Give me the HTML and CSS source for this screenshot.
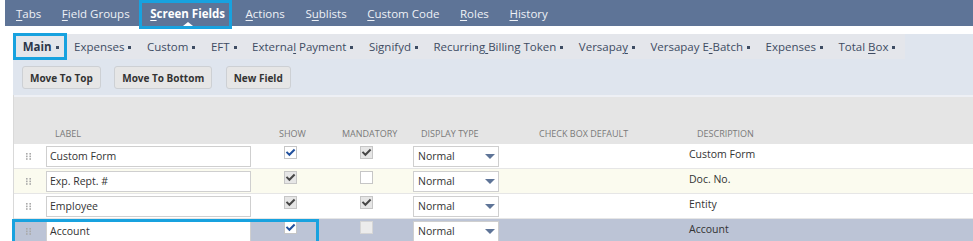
FILE: index.html
```html
<!DOCTYPE html>
<html>
<head>
<meta charset="utf-8">
<link rel="stylesheet" href="styles.css">
</head>
<body>
<nav class="topnav">
  <span class="nav-item"><span><u>T</u>abs</span></span>
  <span class="nav-item"><span><u>F</u>ield Groups</span></span>
  <span class="nav-item active"><span><u>S</u>creen Fields</span></span>
  <span class="nav-item"><span><u>A</u>ctions</span></span>
  <span class="nav-item"><span>S<u>u</u>blists</span></span>
  <span class="nav-item"><span><u>C</u>ustom Code</span></span>
  <span class="nav-item"><span><u>R</u>oles</span></span>
  <span class="nav-item"><span><u>H</u>istory</span></span>
</nav>

<section class="panel">
  <div class="subtabs">
    <span class="subtab active"><span>Main</span><i class="dot"></i></span>
    <span class="subtab"><span>Expenses</span><i class="dot"></i></span>
    <span class="subtab"><span>Custom</span><i class="dot"></i></span>
    <span class="subtab"><span>EFT</span><i class="dot"></i></span>
    <span class="subtab"><span>Externa<u>l</u> Payment</span><i class="dot"></i></span>
    <span class="subtab"><span>Signifyd</span><i class="dot"></i></span>
    <span class="subtab"><span>Recurring<u>&nbsp;</u>Billing Token</span><i class="dot"></i></span>
    <span class="subtab"><span>Versapa<u>y</u></span><i class="dot"></i></span>
    <span class="subtab"><span>Versapay E<u>-</u>Batch</span><i class="dot"></i></span>
    <span class="subtab"><span>Expenses</span><i class="dot"></i></span>
    <span class="subtab"><span>Total <u>B</u>ox</span><i class="dot"></i></span>
  </div>
  <div class="buttons">
    <span class="btn">Move To Top</span>
    <span class="btn">Move To Bottom</span>
    <span class="btn">New Field</span>
  </div>
</section>

<div class="table">
  <div class="thead">
    <span></span>
    <span class="h-label">Label</span>
    <span class="h-show">Show</span>
    <span class="h-mand">Mandatory</span>
    <span class="h-disp">Display Type</span>
    <span class="h-cbd">Check Box Default</span>
    <span class="h-desc">Description</span>
  </div>

  <div class="row">
    <span class="handle"><svg width="6" height="7" viewBox="0 0 6 7"><rect x="0" y="0" width="1.6" height="1.6"/><rect x="3.4" y="0" width="1.6" height="1.6"/><rect x="0" y="2.6" width="1.6" height="1.6"/><rect x="3.4" y="2.6" width="1.6" height="1.6"/><rect x="0" y="5.2" width="1.6" height="1.6"/><rect x="3.4" y="5.2" width="1.6" height="1.6"/></svg></span>
    <span class="field">Custom Form</span>
    <span class="cb"><svg class="tick blue" viewBox="0 0 11 11"><path d="M2.2 5.6 L4.4 7.8 L8.9 3.2"/></svg></span>
    <span class="cb gray"><svg class="tick dark" viewBox="0 0 11 11"><path d="M2.2 5.6 L4.4 7.8 L8.9 3.2"/></svg></span>
    <span class="select">Normal<svg class="arrow" width="10" height="5" viewBox="0 0 10 5"><polygon points="0,0 10,0 5,5"/></svg></span>
    <span></span>
    <span class="desc">Custom Form</span>
  </div>

  <div class="row alt">
    <span class="handle"><svg width="6" height="7" viewBox="0 0 6 7"><rect x="0" y="0" width="1.6" height="1.6"/><rect x="3.4" y="0" width="1.6" height="1.6"/><rect x="0" y="2.6" width="1.6" height="1.6"/><rect x="3.4" y="2.6" width="1.6" height="1.6"/><rect x="0" y="5.2" width="1.6" height="1.6"/><rect x="3.4" y="5.2" width="1.6" height="1.6"/></svg></span>
    <span class="field">Exp. Rept. #</span>
    <span class="cb gray"><svg class="tick dark" viewBox="0 0 11 11"><path d="M2.2 5.6 L4.4 7.8 L8.9 3.2"/></svg></span>
    <span class="cb"></span>
    <span class="select">Normal<svg class="arrow" width="10" height="5" viewBox="0 0 10 5"><polygon points="0,0 10,0 5,5"/></svg></span>
    <span></span>
    <span class="desc">Doc. No.</span>
  </div>

  <div class="row">
    <span class="handle"><svg width="6" height="7" viewBox="0 0 6 7"><rect x="0" y="0" width="1.6" height="1.6"/><rect x="3.4" y="0" width="1.6" height="1.6"/><rect x="0" y="2.6" width="1.6" height="1.6"/><rect x="3.4" y="2.6" width="1.6" height="1.6"/><rect x="0" y="5.2" width="1.6" height="1.6"/><rect x="3.4" y="5.2" width="1.6" height="1.6"/></svg></span>
    <span class="field">Employee</span>
    <span class="cb gray"><svg class="tick dark" viewBox="0 0 11 11"><path d="M2.2 5.6 L4.4 7.8 L8.9 3.2"/></svg></span>
    <span class="cb gray"><svg class="tick dark" viewBox="0 0 11 11"><path d="M2.2 5.6 L4.4 7.8 L8.9 3.2"/></svg></span>
    <span class="select">Normal<svg class="arrow" width="10" height="5" viewBox="0 0 10 5"><polygon points="0,0 10,0 5,5"/></svg></span>
    <span></span>
    <span class="desc">Entity</span>
  </div>

  <div class="row selected">
    <span class="handle"><svg width="6" height="7" viewBox="0 0 6 7"><rect x="0" y="0" width="1.6" height="1.6"/><rect x="3.4" y="0" width="1.6" height="1.6"/><rect x="0" y="2.6" width="1.6" height="1.6"/><rect x="3.4" y="2.6" width="1.6" height="1.6"/><rect x="0" y="5.2" width="1.6" height="1.6"/><rect x="3.4" y="5.2" width="1.6" height="1.6"/></svg></span>
    <span class="field">Account</span>
    <span class="cb"><svg class="tick blue" viewBox="0 0 11 11"><path d="M2.2 5.6 L4.4 7.8 L8.9 3.2"/></svg></span>
    <span class="cb dis"></span>
    <span class="select">Normal<svg class="arrow" width="10" height="5" viewBox="0 0 10 5"><polygon points="0,0 10,0 5,5"/></svg></span>
    <span></span>
    <span class="desc">Account</span>
  </div>
</div>
</body>
</html>
```

FILE: styles.css
```css
body {
  margin: 0;
  font-family: "Open Sans", "DejaVu Sans", sans-serif;
  background: #fff;
  overflow: hidden;
}

/* top navigation */
.topnav {
  margin-left: 5px;
  height: 26px;
  background: #5e7497;
  display: flex;
  align-items: stretch;
  padding-left: 11px;
  gap: 20.6px;
  color: #eef1f6;
  font-size: 11.5px;
}
.nav-item {
  position: relative;
  display: flex;
  align-items: center;
  white-space: nowrap;
}
.nav-item u,
.subtab u {
  text-decoration-thickness: 1px;
  text-underline-offset: 1.5px;
}
.nav-item.active {
  font-weight: 700;
  font-size: 11.5px;
  color: #fff;
}
.nav-item.active::before {
  content: "";
  position: absolute;
  left: 50%;
  bottom: 0;
  transform: translateX(-50%);
  border-left: 5px solid transparent;
  border-right: 5px solid transparent;
  border-bottom: 4px solid #fff;
}
.nav-item.active::after {
  content: "";
  position: absolute;
  left: -11px;
  right: -7px;
  top: 0;
  bottom: -3px;
  border: 3px solid #18a2df;
}

/* panel with subtabs and buttons */
.panel {
  margin: 8px 0 0 13px;
  background: #dfe5ee;
  padding-bottom: 6px;
}
.subtabs {
  display: inline-flex;
  align-items: stretch;
  height: 25px;
  background: #e4e6eb;
  padding: 0 10px 0 9.7px;
  gap: 15.5px;
  font-size: 11.5px;
  color: #3e4c63;
}
.subtab {
  position: relative;
  display: flex;
  align-items: center;
  white-space: nowrap;
}
.dot {
  display: inline-block;
  width: 3px;
  height: 3px;
  background: #3e4c63;
  margin-left: 4px;
  margin-top: 1px;
}
.subtab.active {
  font-weight: 700;
  font-size: 11.5px;
  color: #2b364a;
}
.subtab.active::after {
  content: "";
  position: absolute;
  left: -9.7px;
  right: -8px;
  top: -1px;
  bottom: -1px;
  border: 3px solid #18a2df;
}

.buttons {
  display: flex;
  gap: 13.5px;
  padding: 7px 0 0 9px;
}
.btn {
  height: 23px;
  box-sizing: border-box;
  padding: 0 7px;
  border: 1px solid #cdd0d4;
  border-radius: 3px;
  background: #e6e6e6;
  font-weight: 700;
  font-size: 10px;
  color: #333;
  display: flex;
  align-items: center;
}

/* table */
.table {
  margin-left: 13px;
  border-left: 1px solid #d9d9d9;
}
.thead,
.row {
  display: grid;
  grid-template-columns: 32px 212px 76px 71px 126px 150px 1fr;
}
.thead {
  height: 49px;
  box-sizing: border-box;
  border-top: 2px solid #eef0f5;
  background: #e5e5e5;
  align-items: end;
  padding-bottom: 4px;
  font-size: 9px;
  color: #7a7a7a;
  text-transform: uppercase;
  white-space: nowrap;
}
.h-label { padding-left: 9px; }
.h-show { padding-left: 21px; }
.h-mand { padding-left: 8px; }
.h-disp { padding-left: 16px; }
.h-cbd { padding-left: 8px; }
.h-desc { padding-left: 16px; }

.row {
  height: 25px;
  box-sizing: border-box;
  border-bottom: 1px solid #e6e6e6;
  align-items: center;
  background: #fff;
  font-size: 10.5px;
  color: #333;
}
.row.alt { background: #fbfbef; }
.row.selected {
  position: relative;
  background: #bcc4d6;
  border-bottom-color: #bcc4d6;
}
.row.selected::after {
  content: "";
  position: absolute;
  left: -2px;
  top: 0;
  width: 307px;
  height: 30px;
  box-sizing: border-box;
  border: 3px solid #18a2df;
  pointer-events: none;
}

.handle {
  padding-left: 12px;
  display: flex;
  align-items: center;
}
.handle svg { fill: #a9a9a9; }

.field {
  width: 205px;
  height: 21px;
  box-sizing: border-box;
  border: 1px solid #cfcfcf;
  background: #fff;
  padding-left: 3px;
  display: flex;
  align-items: center;
  white-space: nowrap;
}

.cb {
  width: 13px;
  height: 13px;
  box-sizing: border-box;
  border: 1px solid #c6c6c6;
  background: #fff;
  margin-left: 26px;
  align-self: start;
  margin-top: 2px;
  display: flex;
  align-items: center;
  justify-content: center;
}
.cb.gray { background: #e6e6e6; }
.cb.dis { background: #ececec; border-color: #d6d6d6; }
.tick {
  width: 11px;
  height: 11px;
  fill: none;
  stroke-width: 2;
  stroke-linecap: square;
}
.tick.blue { stroke: #22519e; }
.tick.dark { stroke: #474747; }

.select {
  margin-left: 8px;
  width: 86px;
  height: 21px;
  box-sizing: border-box;
  border: 1px solid #cfcfcf;
  background: #fff;
  padding: 0 3px 0 4px;
  display: flex;
  align-items: center;
  justify-content: space-between;
}
.arrow { fill: #5e7497; }

.desc {
  padding-left: 8px;
  align-self: start;
  padding-top: 3px;
  white-space: nowrap;
}
```
